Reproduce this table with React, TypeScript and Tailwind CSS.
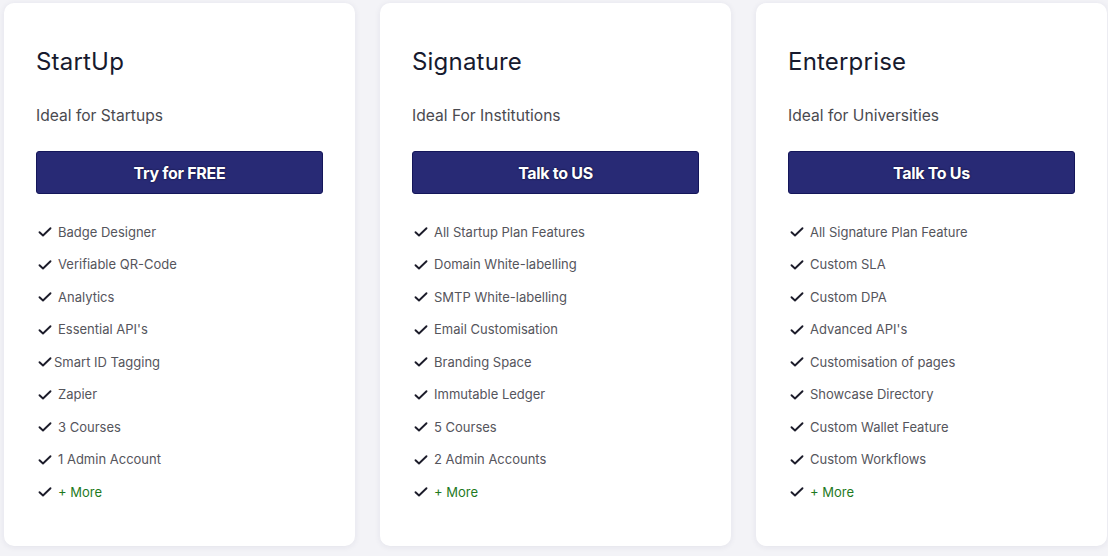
import React from "react";

interface Plan {
    name: string;
    tagline: string;
    cta: string;
    features: string[];
}

const plans: Plan[] = [
    {
        name: "StartUp",
        tagline: "Ideal for Startups",
        cta: "Try for FREE",
        features: ["Badge Designer", "Verifiable QR-Code", "Analytics", "Essential API's", "Smart ID Tagging", "Zapier", "3 Courses", "1 Admin Account"],
    },
    {
        name: "Signature",
        tagline: "Ideal For Institutions",
        cta: "Talk to US",
        features: ["All Startup Plan Features", "Domain White-labelling", "SMTP White-labelling", "Email Customisation", "Branding Space", "Immutable Ledger", "5 Courses", "2 Admin Accounts"],
    },
    {
        name: "Enterprise",
        tagline: "Ideal for Universities",
        cta: "Talk To Us",
        features: ["All Signature Plan Feature", "Custom SLA", "Custom DPA", "Advanced API's", "Customisation of pages", "Showcase Directory", "Custom Wallet Feature", "Custom Workflows"],
    },
];

const Tick = () => (
    <svg width="14" height="14" viewBox="0 0 14 14" fill="none" className="shrink-0">
        <path d="M1.5 7.2 5 10.5 12.5 3.2" stroke="#1c1c2a" strokeWidth="1.9" strokeLinecap="round" strokeLinejoin="round" />
    </svg>
);

const PlanCard = ({ plan }: { plan: Plan }) => (
    <div className="w-[351px] h-[543px] shrink-0 rounded-[10px] bg-white shadow-[0_1px_6px_rgba(40,40,90,0.08)] px-8 pt-[43px]">
        <h2 className="text-[24px] leading-[32px] text-[#171a2e] tracking-[0.2px]">{plan.name}</h2>
        <p className="mt-[26px] text-[15.6px] leading-[24px] text-[#4a4a50]">{plan.tagline}</p>
        <button className="mt-[23px] w-[287px] h-[43px] rounded-[3px] bg-[#282a75] border border-[#14165a] text-white font-bold text-[16px] tracking-[-0.3px] [text-shadow:0_0_2px_rgba(0,0,30,0.9)]">
            {plan.cta}
        </button>
        <ul className="mt-[22px]">
            {plan.features.map((f) => (
                <li key={f} className="h-[32.5px] flex items-center pl-[2px]">
                    <Tick />
                    <span className={`text-[13px] text-[#55555c] ${f === "Smart ID Tagging" ? "ml-[2px]" : "ml-[6px]"}`}>{f}</span>
                </li>
            ))}
            <li className="h-[32.5px] flex items-center pl-[2px]">
                <Tick />
                <span className="ml-[6px] text-[13px] text-[#1f7a1f]">+ More</span>
            </li>
        </ul>
    </div>
);

export default function App() {
    return (
        <div className="w-[1108px] h-[556px] bg-[#f3f3f7] flex gap-[25px] pl-[4px] pt-[3px] overflow-hidden" style={{ fontFamily: "Inter, 'Noto Sans', sans-serif" }}>
            {plans.map((p) => (
                <PlanCard key={p.name} plan={p} />
            ))}
        </div>
    );
}
